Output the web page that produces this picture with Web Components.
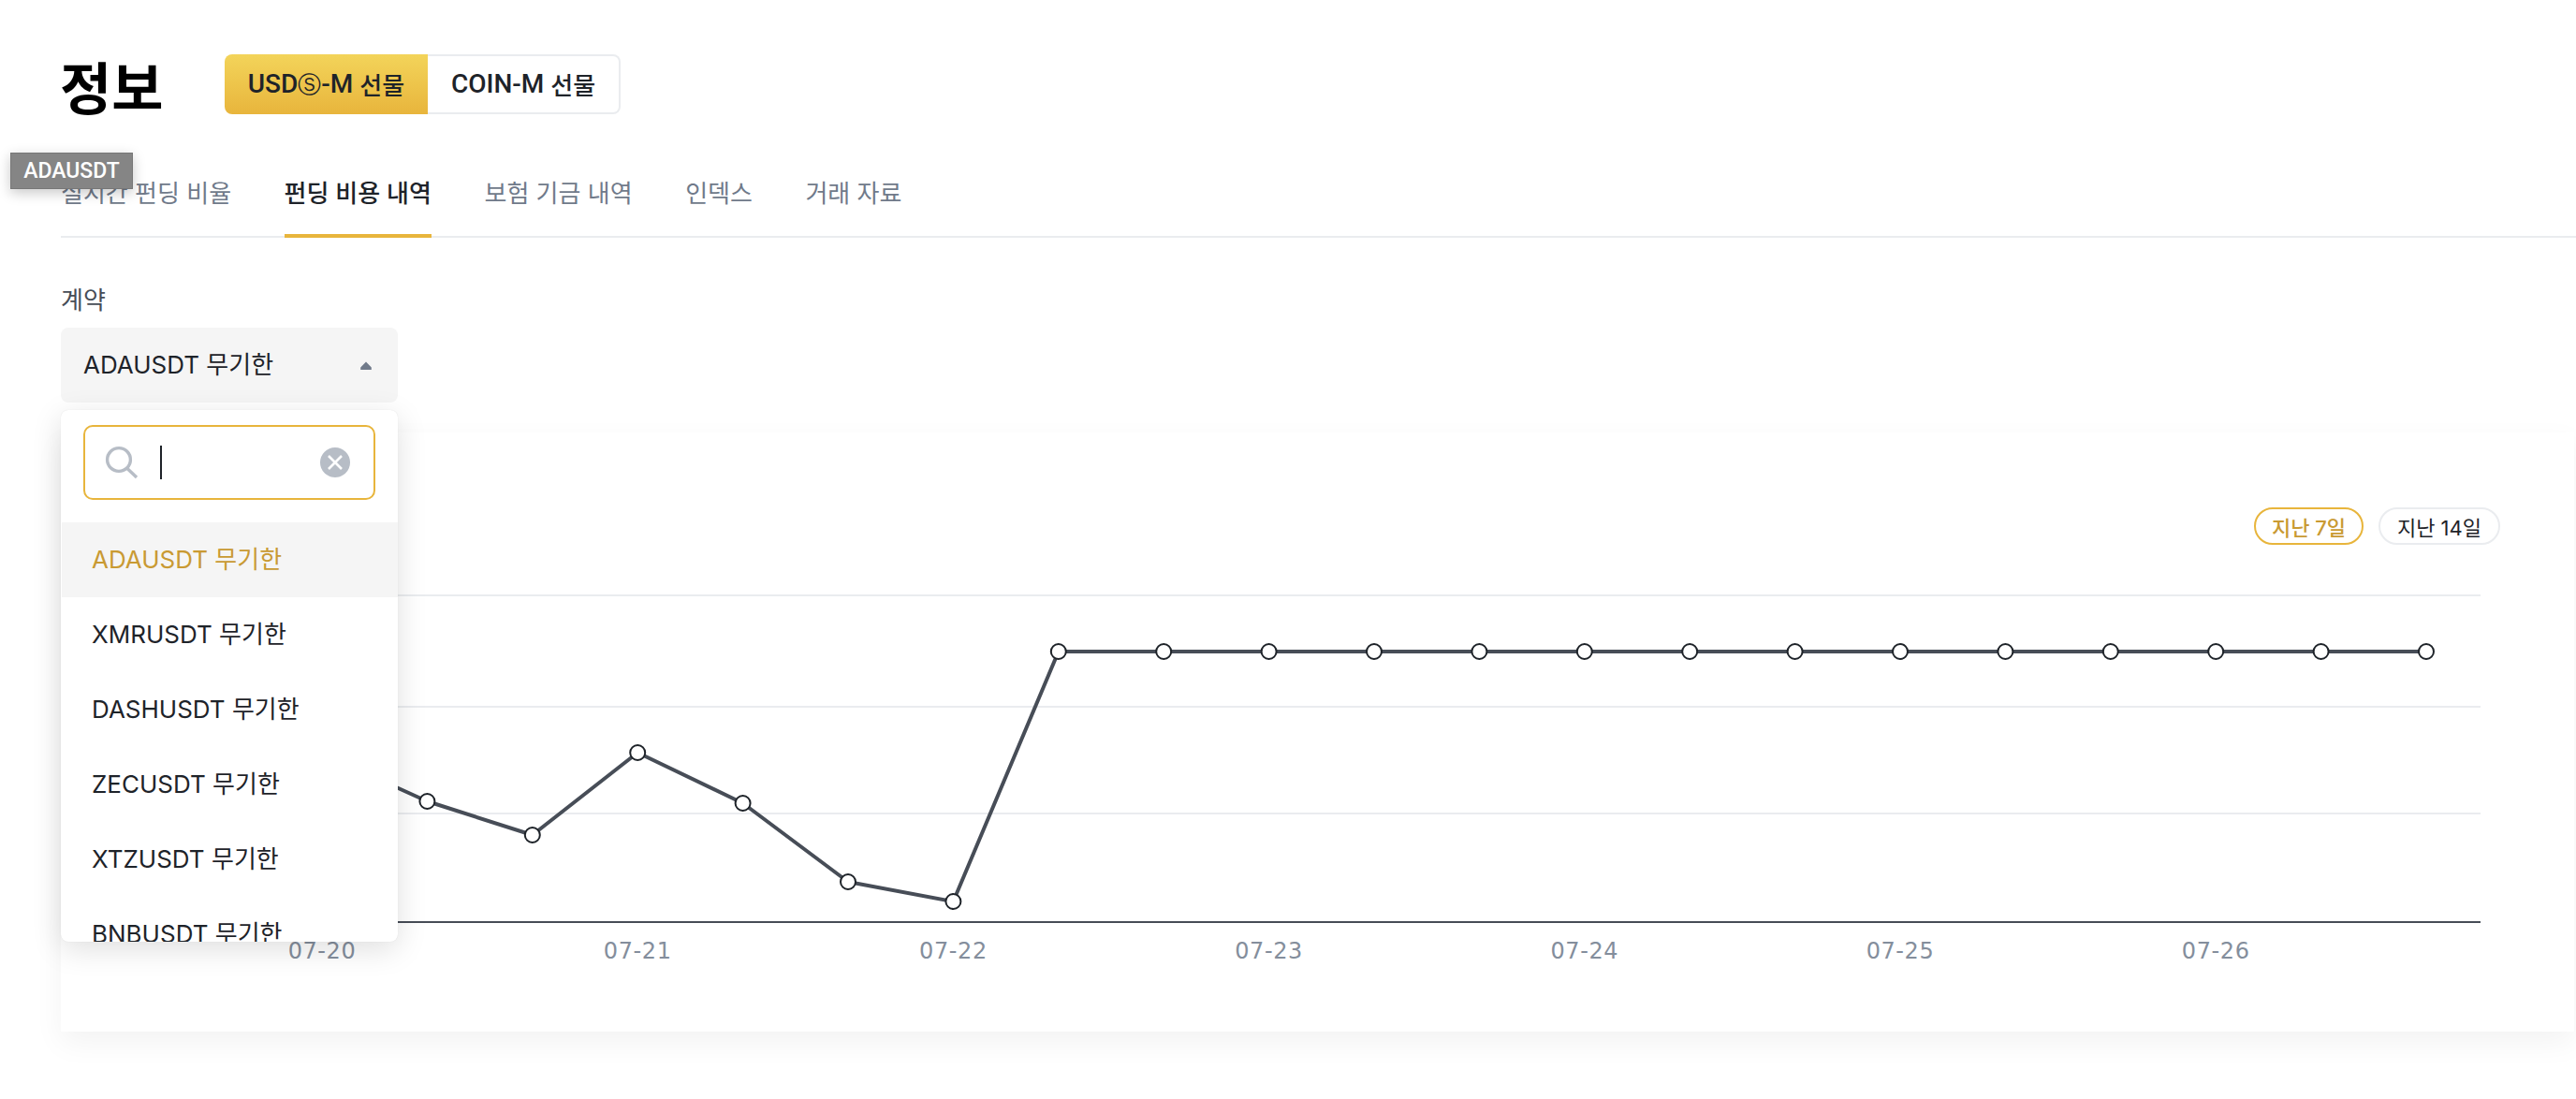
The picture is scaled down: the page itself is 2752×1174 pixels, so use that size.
<!DOCTYPE html>
<html lang="ko"><head><meta charset="utf-8"><title>정보</title>
<style>
html,body{margin:0;padding:0;background:#fff;overflow:hidden;height:100%}
body{font-family:Inter,"Noto Sans CJK KR",sans-serif;color:#1e2329}
</style></head><body>
<fund-page></fund-page>
<script>
function def(name,html,init){
  customElements.define(name,class extends HTMLElement{
    constructor(){super();const s=this.attachShadow({mode:'open'});s.innerHTML=html;if(init)init(s,this)}
  });
}
const F='Inter,"Noto Sans CJK KR",sans-serif';
def('page-header',`<style>
:host{display:flex;align-items:center;height:64px}
h1{margin:0;width:175px;flex:none;font:600 60px/64px "Noto Sans CJK KR",sans-serif;color:#000;position:relative;top:1px;margin-left:-1px}
.t{display:flex;height:64px;box-sizing:border-box;margin-left:1px}
button{all:unset;box-sizing:border-box;height:64px;display:flex;align-items:center;justify-content:center;gap:0;font:500 28px/1 Roboto,"Noto Sans CJK KR",sans-serif;color:#1e2329;white-space:nowrap}
.a{width:217px;background:linear-gradient(180deg,#f3d45a,#e8b53c);border-radius:8px 0 0 8px}
.b{width:206px;background:#fff;border:2px solid #eaecef;border-left:0;border-radius:0 8px 8px 0}
i{font:500 25px/1 "DejaVu Sans",sans-serif}
b{font:500 26px/1 "Noto Sans CJK KR",sans-serif;margin-left:7px}
</style><h1>정보</h1><div class="t"><button class="a">USD<i>Ⓢ</i>-M<b>선물</b></button><button class="b">COIN-M<b>선물</b></button></div>`);
def('tab-bar',`<style>
:host{display:flex;gap:56.5px;height:84px;box-sizing:border-box;border-bottom:2px solid #eaecef;margin-top:48px}
div{height:84px;box-sizing:border-box;padding-top:18px;font:400 26px/38px ${F};color:#707a8a;white-space:nowrap}
.on{color:#1e2329;font-weight:500;border-bottom:4px solid #e8b53c}
</style><div>실시간 펀딩 비율</div><div class="on">펀딩 비용 내역</div><div>보험 기금 내역</div><div>인덱스</div><div>거래 자료</div>`);
def('contract-select',`<style>
:host{display:block;position:relative;margin-top:50px}
label{display:block;height:44px;padding-top:2px;font:400 26px/30px ${F};color:#474d57}
.sel{box-sizing:border-box;width:360px;height:80px;padding:0 28px 0 24px;background:#f5f5f5;border-radius:8px;display:flex;align-items:center;justify-content:space-between;font:400 26px/1 ${F}}
</style><label>계약</label><div class="sel"><span>ADAUSDT 무기한</span><svg width="12" height="9" viewBox="0 0 12 9"><path d="M6 0.5L11.8 6.5V9H.2V6.5Z" fill="#707a8a"/></svg></div>`);
def('select-menu',`<style>
:host{display:block;position:absolute;left:65px;top:438px;width:360px;height:568px;box-sizing:border-box;background:#fff;border-radius:8px;overflow:hidden;box-shadow:0 0 1px rgba(0,0,0,.12),0 8px 32px rgba(0,0,0,.13)}
.search{box-sizing:border-box;margin:16px 24px 24px;height:80px;border:2px solid #e8b53c;border-radius:10px;display:flex;align-items:center;padding:0 25px 0 21px}
.caret{width:2px;height:36px;background:#1e2329;margin-left:23px;flex:none}
.grow{flex:1}
</style><div class="search">
<svg width="36" height="36" viewBox="0 0 36 36" fill="none" stroke="#b7bdc6" stroke-width="3.4"><circle cx="15" cy="15" r="12.4"/><path d="M24 24.5L34 34"/></svg>
<span class="caret"></span><span class="grow"></span>
<svg width="32" height="32" viewBox="0 0 32 32"><circle cx="16" cy="16" r="16" fill="#b7bdc6"/><path d="M9 9L23 23M23 9L9 23" stroke="#fff" stroke-width="2.6" fill="none"/></svg>
</div><slot></slot>`);
def('menu-item',`<style>
:host{display:flex;align-items:center;box-sizing:border-box;height:80px;padding-left:33px;font:400 26px/1 ${F};color:#1e2329;white-space:nowrap}
:host([selected]){background:#f5f5f5;color:#c99a33;margin-left:1px;padding-left:32px}
</style><slot></slot>`);
def('range-pills',`<style>
:host{display:flex;justify-content:flex-end;gap:16px;padding:80px 79px 0 0}
span{box-sizing:border-box;height:40px;padding-top:3px;display:flex;align-items:center;justify-content:center;border:2px solid #eaecef;border-radius:20px;font:400 22px/1 ${F};color:#1e2329;white-space:nowrap}
.a{width:117px;border-color:#e8b53c;color:#c99a33;font-weight:500}.b{width:130px}
</style><span class="a">지난 7일</span><span class="b">지난 14일</span>`);
def('funding-chart',`<style>:host{display:block;height:100%}svg{display:block;overflow:visible}text{font:24px "DejaVu Sans",sans-serif;fill:#848e9c;text-anchor:middle;letter-spacing:.6px}</style><svg id="s" width="2685" height="520" viewBox="65 582 2685 520"></svg>`,(s)=>{
  const ys=[805,856,892,804,858,942,963,696,696,696,696,696,696,696,696,696,696,696,696,696,696];
  const xs=ys.map((_,i)=>344+i*112.4);
  let h='';
  for(const y of [636,755,869])h+=`<rect x="344" y="${y-1}" width="2306" height="2" fill="#eaecef"/>`;
  h+=`<rect x="300" y="984" width="2350" height="2" fill="#474d57"/>`;
  h+=`<polyline fill="none" stroke="#474d57" stroke-width="4" stroke-linejoin="round" points="${xs.map((x,i)=>x+','+ys[i]).join(' ')}"/>`;
  xs.forEach((x,i)=>{h+=`<circle cx="${x}" cy="${ys[i]}" r="8" fill="#fff" stroke="#1e2329" stroke-width="2"/>`});
  ['07-20','07-21','07-22','07-23','07-24','07-25','07-26'].forEach((t,i)=>{h+=`<text x="${344+i*337.2}" y="1024">${t}</text>`});
  s.getElementById('s').innerHTML=h;
});
def('chart-card',`<style>
:host{display:block;height:640px;width:2685px;background:#fff;box-shadow:0 12px 30px rgba(0,0,0,.05)}
.c{height:520px}
</style><range-pills></range-pills><div class="c"><funding-chart></funding-chart></div>`);
def('hover-tip',`<style>
:host{position:absolute;left:11px;top:163px;width:131px;height:39px;box-sizing:border-box;display:flex;align-items:center;justify-content:center;background:#858585;border:1px solid #777;color:#fff;font:500 23px/1 Roboto,sans-serif;box-shadow:0 4px 14px rgba(0,0,0,.22)}
</style><slot></slot>`);
def('fund-page',`<style>
:host{display:block;position:relative;padding:58px 0 0 65px;height:1174px;box-sizing:border-box;overflow:hidden}
chart-card{margin-top:32px}
</style>
<page-header></page-header><tab-bar></tab-bar><contract-select></contract-select>
<chart-card></chart-card>
<select-menu>
<menu-item selected>ADAUSDT 무기한</menu-item><menu-item>XMRUSDT 무기한</menu-item><menu-item>DASHUSDT 무기한</menu-item><menu-item>ZECUSDT 무기한</menu-item><menu-item>XTZUSDT 무기한</menu-item><menu-item>BNBUSDT 무기한</menu-item>
</select-menu>
<hover-tip>ADAUSDT</hover-tip>`);
</script></body></html>
